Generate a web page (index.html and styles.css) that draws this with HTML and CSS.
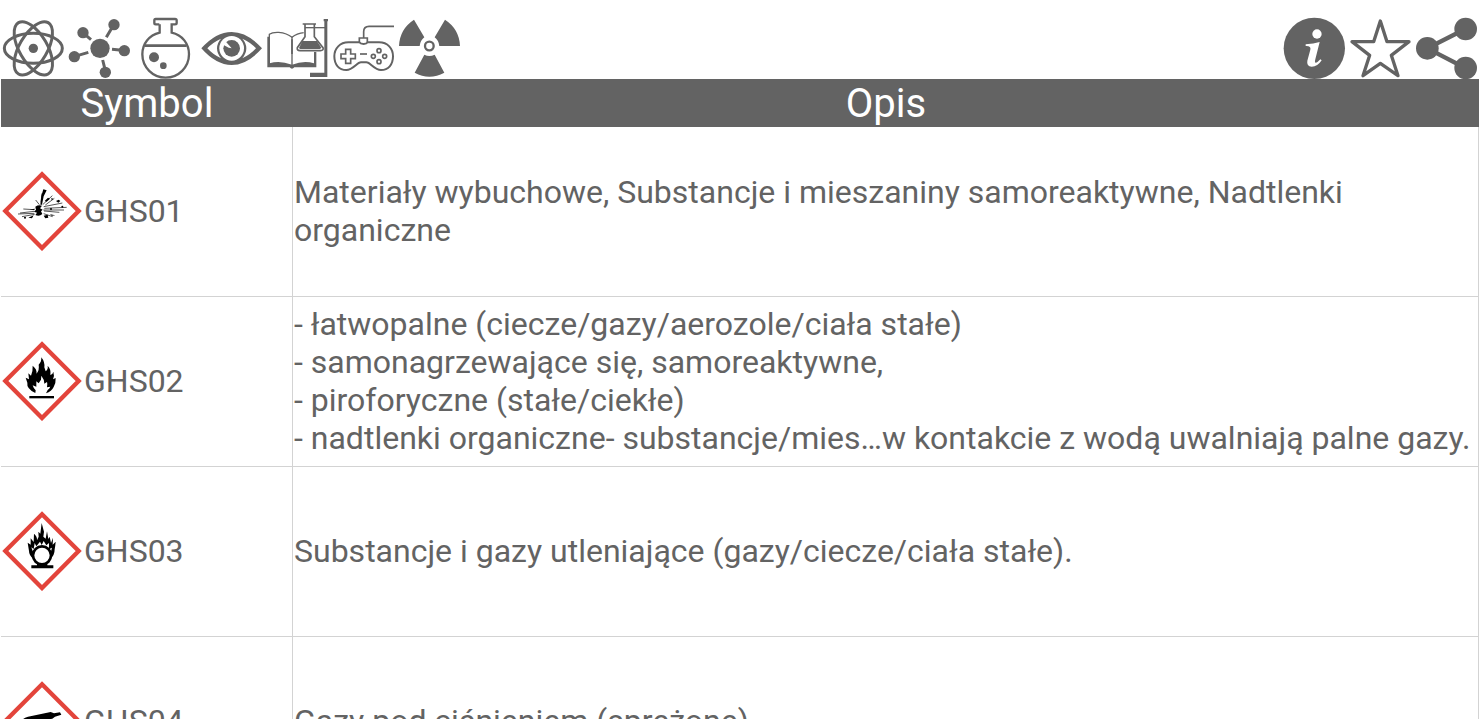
FILE: index.html
```html
<!DOCTYPE html>
<html lang="pl">
<head>
  <meta charset="UTF-8" />
  <meta name="viewport" content="width=device-width, initial-scale=1.0"/>
  <title>GHS</title>
  <link rel="stylesheet" href="styles.css">
</head>
<body>
  <div class="page">
    <header class="toolbar">
      <nav class="tools">
        <button type="button" class="tool" aria-label="Atom">
          <svg viewBox="0 18 198 189">
            <g class="line" stroke-width="9">
              <ellipse cx="100" cy="115" rx="87" ry="45"/>
              <ellipse cx="100" cy="115" rx="89" ry="42" transform="rotate(60 100 115)"/>
              <ellipse cx="100" cy="115" rx="89" ry="42" transform="rotate(-60 100 115)"/>
            </g>
            <circle cx="100" cy="115" r="14"/>
          </svg>
        </button>
        <button type="button" class="tool" aria-label="Cząsteczka">
          <svg viewBox="198 18 198 189">
            <circle cx="300" cy="115" r="29"/>
            <circle cx="249" cy="68" r="17"/>
            <circle cx="342" cy="44" r="17"/>
            <circle cx="373" cy="122" r="17"/>
            <circle cx="316" cy="187" r="17"/>
            <circle cx="223" cy="140" r="17"/>
            <path class="line" stroke-width="9" d="M258 76L273 89M335 55L319 82M366 121L336 118M315 178L308 150M232 137L265 127"/>
          </svg>
        </button>
        <button type="button" class="tool" aria-label="Kolba">
          <svg viewBox="396 18 198 189">
            <path class="line" stroke-width="7" d="M478 43H467Q463 43 463 39V31Q463 27 467 27H525Q530 27 530 31V39Q530 43 525 43H515V68C547 75 567 101 567 133A70 70 0 0 1 427 133C427 101 447 76 479 68V43"/>
            <path class="line" stroke-width="8" d="M434 107H560"/>
            <circle cx="462" cy="142" r="15"/>
            <circle cx="490" cy="167" r="10"/>
          </svg>
        </button>
        <button type="button" class="tool" aria-label="Podgląd">
          <svg viewBox="9 18 198 189">
            <path fill-rule="evenodd" d="M19 115Q63 66 110 66Q157 66 201 115Q157 165 110 165Q63 165 19 115ZM37 115Q53 133 78 145Q66 131 66 115Q66 99 78 86Q53 97 37 115ZM142 86Q154 99 154 115Q154 131 142 145Q167 133 183 115Q167 97 142 86Z"/>
            <circle cx="110" cy="115" r="37" fill="#fff"/>
            <circle cx="110" cy="115" r="25"/>
            <path d="M110 115L88 90L79 101L101 113Z" fill="#fff"/>
          </svg>
        </button>
        <button type="button" class="tool" aria-label="Podręcznik">
          <svg viewBox="207 18 198 189">
            <path class="line" stroke-width="4" d="M223 163V73Q232 66 251 67Q276 69 291 82Q305 70 328 68"/>
            <path class="line" stroke-width="4" d="M291 80V168"/>
            <path d="M217 80H224V160Q253 150 291 164Q327 150 357 160V126H364V172H298Q291 180 284 172H217Z"/>
            <path class="line" stroke-width="5" d="M291 88V132"/>
            <path d="M304 115L326 82V46H362V82L387 115Q387 125 376 125H315Q304 125 304 115Z" fill="#fff"/>
            <path class="line" stroke-width="5" d="M323 42H363M330 44V80L307 113Q305 122 315 122H376Q387 121 384 113L358 80V44"/>
            <path d="M322 93H366L378 112Q379 117 374 117H316Q311 117 313 112Z"/>
            <path class="line" stroke-width="4" d="M330 53H390"/>
            <path d="M386 27H399V34H397V201H345V188H388V34H386Z"/>
          </svg>
        </button>
        <button type="button" class="tool" aria-label="Gra">
          <svg viewBox="15 18 198 189">
            <path class="line" stroke-width="5" d="M116 83V65Q116 49 132 49H207M103 96V84H127V96"/>
            <path class="line" stroke-width="6" d="M70 97H103Q106 102 116 102Q125 102 128 97H162C188 97 204 115 204 139C204 164 190 180 168 180C147 180 137 157 124 157H108C95 157 85 180 64 180C42 180 28 164 28 139C28 115 45 97 70 97Z"/>
            <path class="line" stroke-width="5" d="M62 118H77V132H91V146H77V160H62V146H48V132H62Z"/>
            <path class="line" stroke-width="5" d="M105 132H126"/>
            <g class="line" stroke-width="5">
              <circle cx="162" cy="122" r="6"/>
              <circle cx="162" cy="155" r="6"/>
              <circle cx="145" cy="139" r="6"/>
              <circle cx="179" cy="139" r="6"/>
            </g>
          </svg>
        </button>
        <button type="button" class="tool" aria-label="Promieniowanie">
          <svg viewBox="213 18 198 189">
            <path d="M222 108Q224 57 267 29L298 82Q286 91 284 108Z"/>
            <path d="M405 108Q403 57 360 29L329 82Q341 91 343 108Z"/>
            <path d="M269 188Q313 212 358 188L329 134Q313 142 298 134Z"/>
            <circle class="line" cx="313" cy="108" r="13" stroke-width="7"/>
          </svg>
        </button>
      </nav>
      <div class="tools">
        <button type="button" class="tool" aria-label="Informacje">
          <svg viewBox="21 18 198 189">
            <circle cx="118" cy="115" r="92"/>
            <g fill="#fff">
              <circle cx="126" cy="72" r="14"/>
              <path d="M92 103Q116 101 134 96L121 148Q118 159 123 158Q128 157 136 148L140 151Q128 170 110 170Q94 169 97 152L106 119Q109 107 92 108Z"/>
            </g>
          </svg>
        </button>
        <button type="button" class="tool" aria-label="Ulubione">
          <svg viewBox="219 18 198 189">
            <path class="line" stroke-width="10" stroke-linejoin="round" d="M316 33L336 95H402L349 136L369 197L316 160L264 197L284 136L231 95H296Z"/>
          </svg>
        </button>
        <button type="button" class="tool" aria-label="Udostępnij">
          <svg viewBox="417 18 198 189">
            <path class="line" stroke-width="13" d="M571 57L457 115L571 174"/>
            <circle cx="457" cy="115" r="34"/>
            <circle cx="572" cy="57" r="34"/>
            <circle cx="572" cy="174" r="34"/>
          </svg>
        </button>
      </div>
    </header>

    <table class="ghs-table">
      <thead>
        <tr>
          <th class="symbol-col">Symbol</th>
          <th>Opis</th>
        </tr>
      </thead>
      <tbody>
        <tr>
          <td>
            <div class="symbol">
              <svg class="pictogram" viewBox="6 17 240 240">
                <path class="frame" d="M126 27L236 137L126 248L16 137Z"/>
                <path d="M106 124Q115 118 126 121L120 129L128 133L123 138L127 146Q118 155 106 149L111 142L102 139L108 133Z"/>
                <path d="M121 118L124 92L130 72L140 75L131 93L126 118ZM134 107L144 97L150 100L140 109ZM154 97L160 101L155 105ZM168 107L176 103L181 107L175 112ZM85 157L101 150L96 159ZM131 151L143 148L145 157L136 159ZM89 132L106 130L102 134ZM150 147L166 150L155 151Z"/>
                <path class="thin" d="M128 118L157 91M131 124L187 113M133 129L200 126M132 137L178 141M130 134L192 134M102 133L70 131M103 138L60 143M103 144L54 146M104 147L66 154M118 118L107 104M123 111L126 84M131 145L158 154M136 119L163 99"/>
                <circle cx="75" cy="157" r="3"/>
                <circle cx="153" cy="131" r="3"/>
                <circle cx="187" cy="124" r="3"/>
              </svg>
              <span>GHS01</span>
            </div>
          </td>
          <td>Materiały wybuchowe, Substancje i mieszaniny samoreaktywne, Nadtlenki organiczne</td>
        </tr>
        <tr>
          <td>
            <div class="symbol">
              <svg class="pictogram" viewBox="6 17 240 240">
                <path class="frame" d="M126 27L236 137L126 248L16 137Z"/>
                <path d="M106 173Q79 160 82 142L77 127L87 132L85 114L93 121Q99 106 98 91Q112 102 109 115Q119 105 116 88Q125 80 124 66Q135 80 133 96L137 108Q145 102 143 91Q154 102 151 119Q159 116 160 109Q164 121 159 132L167 128Q168 143 161 155Q155 168 138 174L143 164Q149 160 151 154L141 156Q143 146 141 140L133 145Q133 132 124 121L123 133L116 144L109 138L109 154L98 150Q101 161 107 165Z"/>
                <rect x="88" y="182" width="74" height="7"/>
              </svg>
              <span>GHS02</span>
            </div>
          </td>
          <td>- łatwopalne (ciecze/gazy/aerozole/ciała stałe)<br>- samonagrzewające się, samoreaktywne,<br>- piroforyczne (stałe/ciekłe)<br>- nadtlenki organiczne- substancje/mies…w kontakcie z wodą uwalniają palne gazy.</td>
        </tr>
        <tr>
          <td>
            <div class="symbol">
              <svg class="pictogram" viewBox="6 17 240 240">
                <path class="frame" d="M126 27L236 137L126 248L16 137Z"/>
                <path d="M101 161Q87 151 87 137L83 112L92 118L92 99L101 110L102 85Q112 93 111 105L116 94L115 79L121 85L125 53L132 79L130 94L137 100L141 78L145 101L149 94L153 113L159 97L158 118L167 109Q166 121 164 132Q164 152 150 161Z"/>
                <path d="M98 137L94 126L101 131L104 113L109 123L120 109L125 119L131 107L139 120L147 113L147 132L156 127L151 145L126 158L103 146Z" fill="#fff"/>
                <circle cx="126" cy="150" r="27" fill="#fff" stroke="#000" stroke-width="8"/>
                <path d="M94 180H111V175H142V180H160V189H94Z"/>
              </svg>
              <span>GHS03</span>
            </div>
          </td>
          <td>Substancje i gazy utleniające (gazy/ciecze/ciała stałe).</td>
        </tr>
        <tr>
          <td>
            <div class="symbol">
              <svg class="pictogram" viewBox="6 17 240 240">
                <path class="frame" d="M126 27L236 137L126 248L16 137Z"/>
                <path d="M66 136Q70 127 84 124L152 110L162 114L180 111L184 118L165 124L157 130L88 145Q70 149 66 136Z"/>
              </svg>
              <span>GHS04</span>
            </div>
          </td>
          <td>Gazy pod ciśnieniem (sprężone)</td>
        </tr>
      </tbody>
    </table>
  </div>
</body>
</html>
```

FILE: styles.css
```css
* {
  box-sizing: border-box;
}

body {
  margin: 0;
  height: 100vh;
  padding-bottom: 1px;
  background-color: #fff;
  color: #636363;
  font-family: Roboto, sans-serif;
  font-size: 32px;
  line-height: 38px;
}

.page {
  height: 100%;
  overflow: hidden;
}

.toolbar {
  display: flex;
  justify-content: space-between;
  padding-top: 16px;
}

.tools {
  display: flex;
}

.tool {
  width: 66px;
  height: 63px;
  padding: 0;
  border: none;
  background: none;
  color: inherit;
  cursor: pointer;
}

.tool svg {
  display: block;
  width: 100%;
  height: 100%;
  fill: currentColor;
  overflow: visible;
}

.tool .line {
  fill: none;
  stroke: currentColor;
}

.ghs-table {
  width: calc(100% - 2px);
  margin: 0 1px;
  border-collapse: separate;
  border-spacing: 0;
  table-layout: fixed;
}

.ghs-table th {
  height: 48px;
  padding: 2px 0 0;
  background-color: #636363;
  color: #fff;
  font-size: 40px;
  font-weight: 400;
  line-height: 46px;
}

.symbol-col {
  width: 292px;
}

.ghs-table td {
  height: 170px;
  padding: 0 1px 2px;
  border-right: 1px solid #d3d3d3;
  border-bottom: 1px solid #d3d3d3;
  vertical-align: middle;
}

.symbol {
  display: flex;
  align-items: center;
  gap: 2px;
}

.pictogram {
  width: 80px;
  height: 80px;
}

.pictogram .frame {
  fill: #fff;
  stroke: #e3443b;
  stroke-width: 13;
}

.pictogram .thin {
  fill: none;
  stroke: #000;
  stroke-width: 2;
}
```
